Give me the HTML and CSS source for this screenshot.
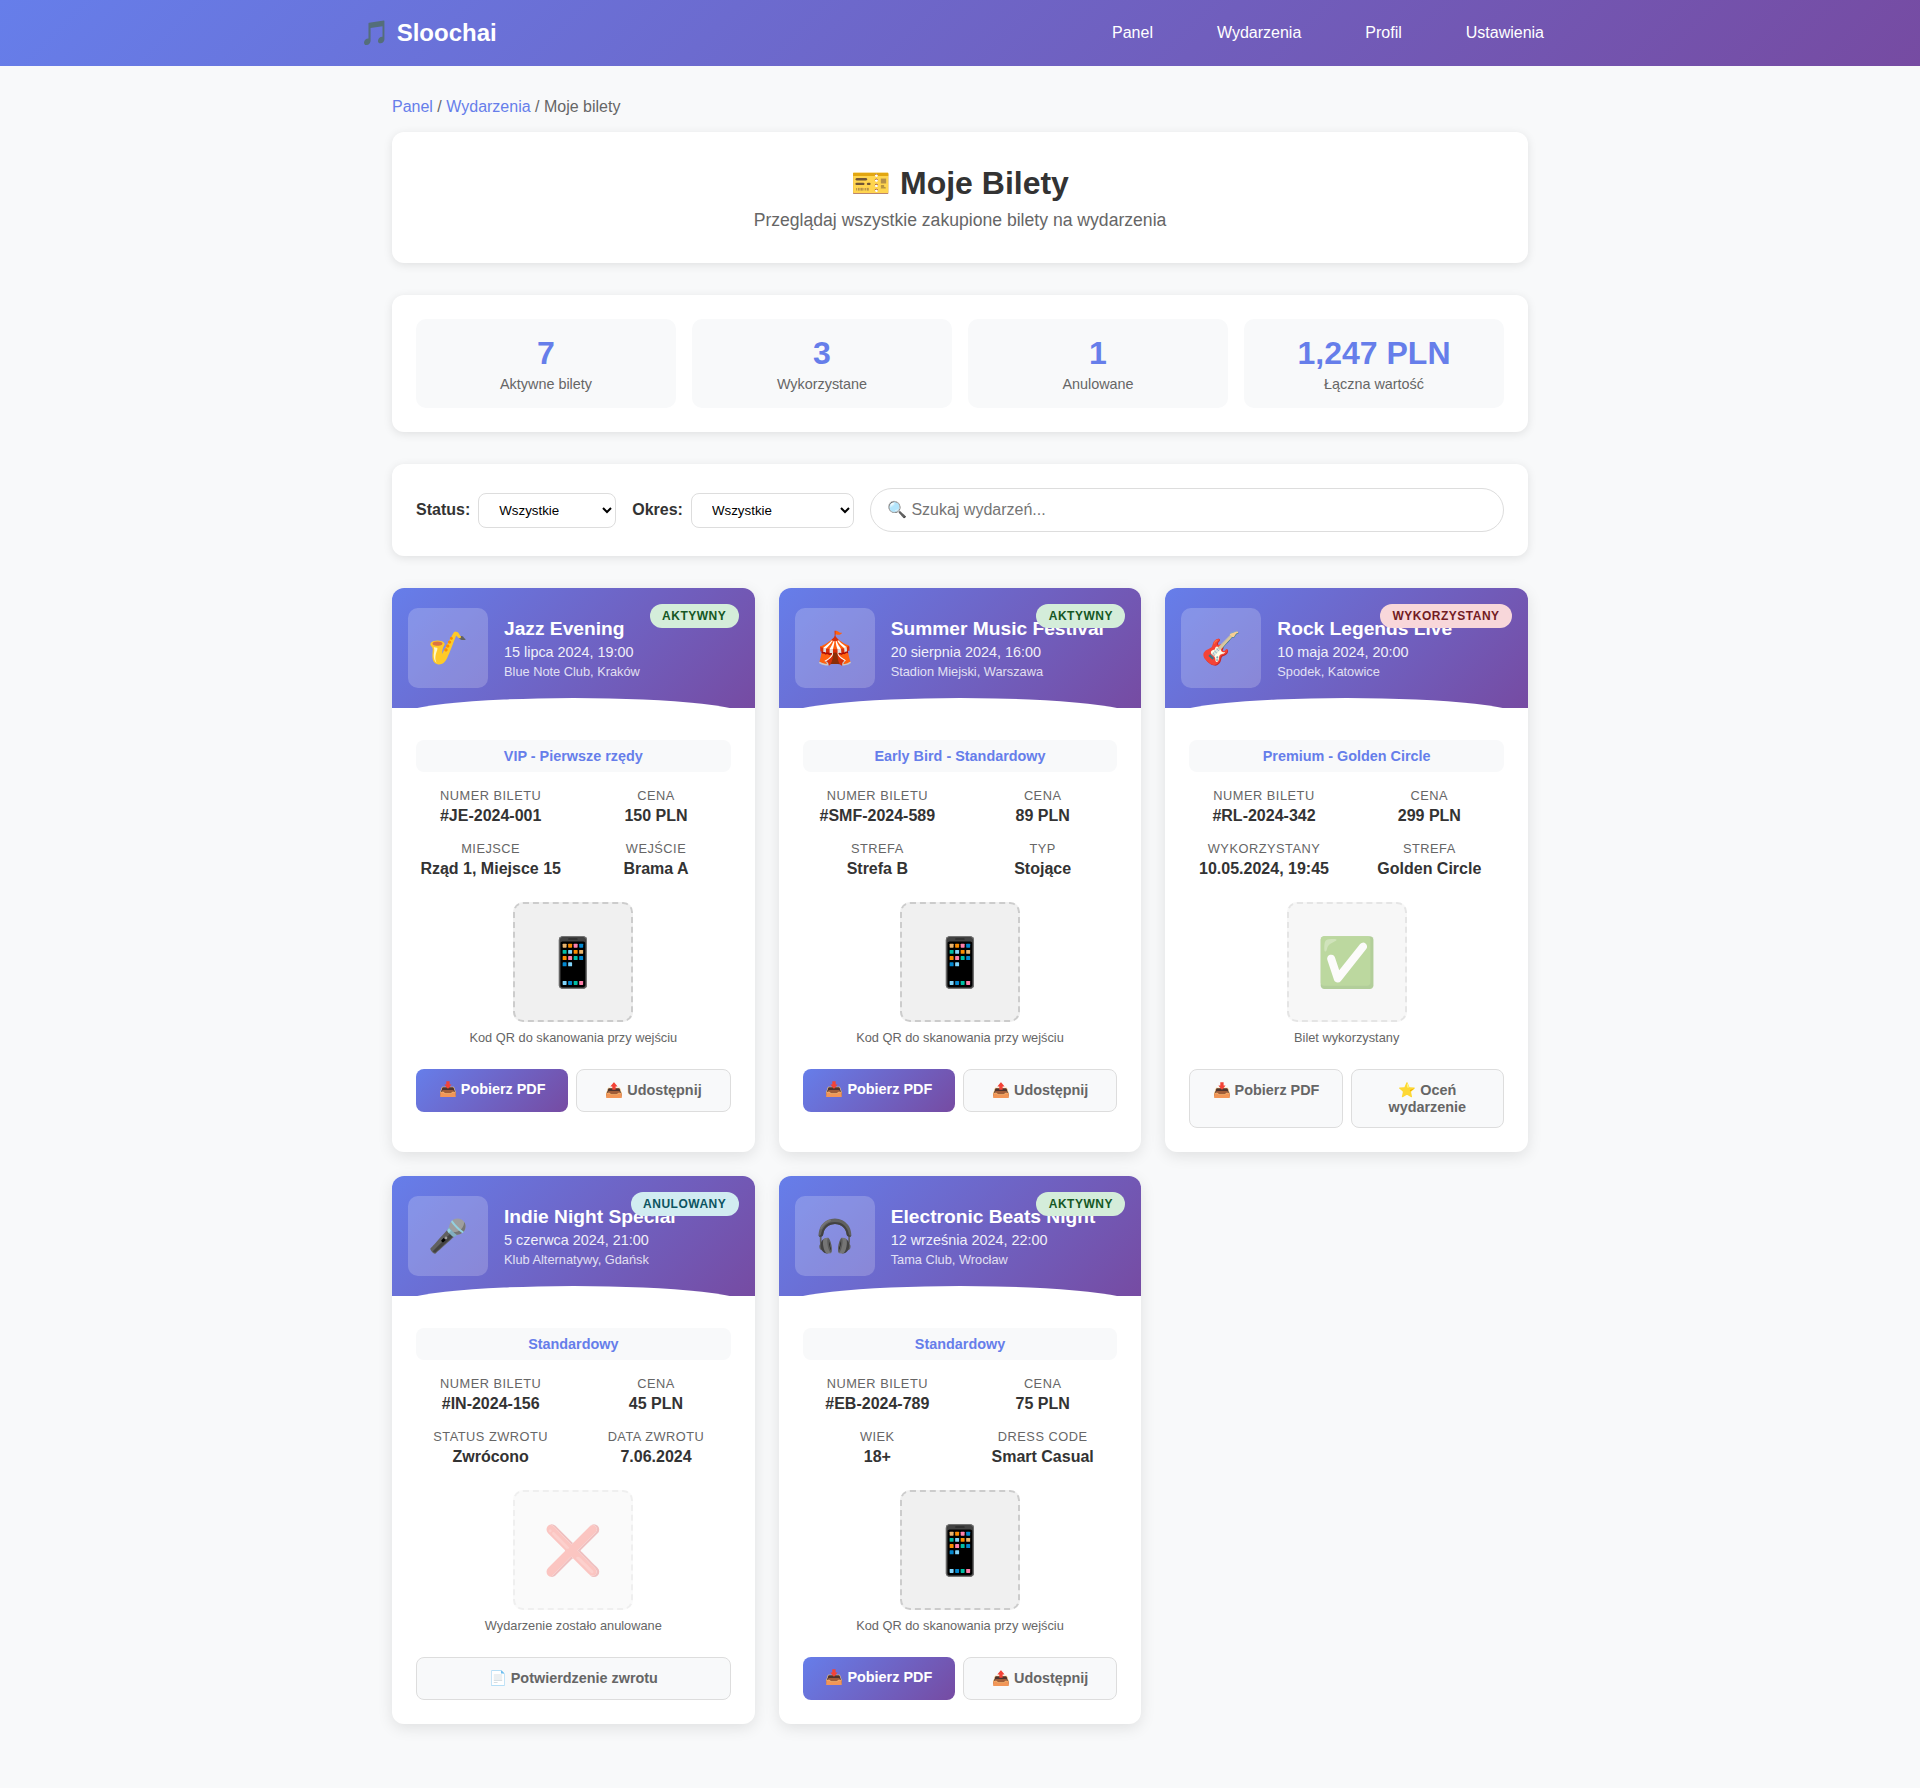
FILE: index.html
```html
<!DOCTYPE html>
<html lang="pl">
<head>
  <meta charset="UTF-8">
  <meta name="viewport" content="width=device-width, initial-scale=1.0">
  <title>Moje Bilety - Sloochai</title>
  <link rel="stylesheet" href="styles.css">
</head>
<body>
  <header class="topbar">
    <nav class="topbar-inner">
      <a class="logo" href="#">🎵 Sloochai</a>
      <ul class="nav-links">
        <li><a href="#">Panel</a></li>
        <li><a href="#">Wydarzenia</a></li>
        <li><a href="#">Profil</a></li>
        <li><a href="#">Ustawienia</a></li>
      </ul>
    </nav>
  </header>

  <main class="container">
    <div class="breadcrumb"><a href="#">Panel</a> / <a href="#">Wydarzenia</a> / Moje bilety</div>

    <section class="page-header panel">
      <h1>🎫 Moje Bilety</h1>
      <p>Przeglądaj wszystkie zakupione bilety na wydarzenia</p>
    </section>

    <section class="stats panel">
      <div class="stat"><div class="stat-value">7</div><div class="stat-label">Aktywne bilety</div></div>
      <div class="stat"><div class="stat-value">3</div><div class="stat-label">Wykorzystane</div></div>
      <div class="stat"><div class="stat-value">1</div><div class="stat-label">Anulowane</div></div>
      <div class="stat"><div class="stat-value">1,247 PLN</div><div class="stat-label">Łączna wartość</div></div>
    </section>

    <section class="filters panel">
      <label for="status">Status:</label>
      <select id="status">
        <option>Wszystkie</option>
        <option>Aktywne</option>
        <option>Wykorzystane</option>
        <option>Anulowane</option>
      </select>
      <label for="period">Okres:</label>
      <select id="period">
        <option>Wszystkie</option>
        <option>Nadchodzące</option>
        <option>Poprzedni miesiąc</option>
        <option>Ten rok</option>
      </select>
      <input class="search" type="text" placeholder="🔍 Szukaj wydarzeń...">
    </section>

    <section class="tickets">
      <article class="ticket">
        <div class="ticket-header">
          <span class="badge badge-active">Aktywny</span>
          <div class="thumb">🎷</div>
          <div>
            <h3>Jazz Evening</h3>
            <div class="date">15 lipca 2024, 19:00</div>
            <div class="venue">Blue Note Club, Kraków</div>
          </div>
        </div>
        <div class="ticket-body">
          <div class="ticket-type">VIP - Pierwsze rzędy</div>
          <div class="details">
            <div><div class="detail-label">Numer biletu</div><div class="detail-value">#JE-2024-001</div></div>
            <div><div class="detail-label">Cena</div><div class="detail-value">150 PLN</div></div>
            <div><div class="detail-label">Miejsce</div><div class="detail-value">Rząd 1, Miejsce 15</div></div>
            <div><div class="detail-label">Wejście</div><div class="detail-value">Brama A</div></div>
          </div>
          <div class="qr-block">
            <div class="qr">📱</div>
            <div class="qr-text">Kod QR do skanowania przy wejściu</div>
          </div>
          <div class="actions">
            <a class="btn btn-primary" href="#">📥 Pobierz PDF</a>
            <a class="btn btn-secondary" href="#">📤 Udostępnij</a>
          </div>
        </div>
      </article>

      <article class="ticket">
        <div class="ticket-header">
          <span class="badge badge-active">Aktywny</span>
          <div class="thumb">🎪</div>
          <div>
            <h3>Summer Music Festival</h3>
            <div class="date">20 sierpnia 2024, 16:00</div>
            <div class="venue">Stadion Miejski, Warszawa</div>
          </div>
        </div>
        <div class="ticket-body">
          <div class="ticket-type">Early Bird - Standardowy</div>
          <div class="details">
            <div><div class="detail-label">Numer biletu</div><div class="detail-value">#SMF-2024-589</div></div>
            <div><div class="detail-label">Cena</div><div class="detail-value">89 PLN</div></div>
            <div><div class="detail-label">Strefa</div><div class="detail-value">Strefa B</div></div>
            <div><div class="detail-label">Typ</div><div class="detail-value">Stojące</div></div>
          </div>
          <div class="qr-block">
            <div class="qr">📱</div>
            <div class="qr-text">Kod QR do skanowania przy wejściu</div>
          </div>
          <div class="actions">
            <a class="btn btn-primary" href="#">📥 Pobierz PDF</a>
            <a class="btn btn-secondary" href="#">📤 Udostępnij</a>
          </div>
        </div>
      </article>

      <article class="ticket">
        <div class="ticket-header">
          <span class="badge badge-used">Wykorzystany</span>
          <div class="thumb">🎸</div>
          <div>
            <h3>Rock Legends Live</h3>
            <div class="date">10 maja 2024, 20:00</div>
            <div class="venue">Spodek, Katowice</div>
          </div>
        </div>
        <div class="ticket-body">
          <div class="ticket-type">Premium - Golden Circle</div>
          <div class="details">
            <div><div class="detail-label">Numer biletu</div><div class="detail-value">#RL-2024-342</div></div>
            <div><div class="detail-label">Cena</div><div class="detail-value">299 PLN</div></div>
            <div><div class="detail-label">Wykorzystany</div><div class="detail-value">10.05.2024, 19:45</div></div>
            <div><div class="detail-label">Strefa</div><div class="detail-value">Golden Circle</div></div>
          </div>
          <div class="qr-block">
            <div class="qr qr-used">✅</div>
            <div class="qr-text">Bilet wykorzystany</div>
          </div>
          <div class="actions">
            <a class="btn btn-secondary" href="#">📥 Pobierz PDF</a>
            <a class="btn btn-secondary" href="#">⭐ Oceń wydarzenie</a>
          </div>
        </div>
      </article>

      <article class="ticket">
        <div class="ticket-header">
          <span class="badge badge-cancelled">Anulowany</span>
          <div class="thumb">🎤</div>
          <div>
            <h3>Indie Night Special</h3>
            <div class="date">5 czerwca 2024, 21:00</div>
            <div class="venue">Klub Alternatywy, Gdańsk</div>
          </div>
        </div>
        <div class="ticket-body">
          <div class="ticket-type">Standardowy</div>
          <div class="details">
            <div><div class="detail-label">Numer biletu</div><div class="detail-value">#IN-2024-156</div></div>
            <div><div class="detail-label">Cena</div><div class="detail-value">45 PLN</div></div>
            <div><div class="detail-label">Status zwrotu</div><div class="detail-value">Zwrócono</div></div>
            <div><div class="detail-label">Data zwrotu</div><div class="detail-value">7.06.2024</div></div>
          </div>
          <div class="qr-block">
            <div class="qr qr-cancelled">❌</div>
            <div class="qr-text">Wydarzenie zostało anulowane</div>
          </div>
          <div class="actions">
            <a class="btn btn-secondary" href="#">📄 Potwierdzenie zwrotu</a>
          </div>
        </div>
      </article>

      <article class="ticket">
        <div class="ticket-header">
          <span class="badge badge-active">Aktywny</span>
          <div class="thumb">🎧</div>
          <div>
            <h3>Electronic Beats Night</h3>
            <div class="date">12 września 2024, 22:00</div>
            <div class="venue">Tama Club, Wrocław</div>
          </div>
        </div>
        <div class="ticket-body">
          <div class="ticket-type">Standardowy</div>
          <div class="details">
            <div><div class="detail-label">Numer biletu</div><div class="detail-value">#EB-2024-789</div></div>
            <div><div class="detail-label">Cena</div><div class="detail-value">75 PLN</div></div>
            <div><div class="detail-label">Wiek</div><div class="detail-value">18+</div></div>
            <div><div class="detail-label">Dress code</div><div class="detail-value">Smart Casual</div></div>
          </div>
          <div class="qr-block">
            <div class="qr">📱</div>
            <div class="qr-text">Kod QR do skanowania przy wejściu</div>
          </div>
          <div class="actions">
            <a class="btn btn-primary" href="#">📥 Pobierz PDF</a>
            <a class="btn btn-secondary" href="#">📤 Udostępnij</a>
          </div>
        </div>
      </article>
    </section>
  </main>
</body>
</html>
```

FILE: styles.css
```css
* {
  margin: 0;
  padding: 0;
  box-sizing: border-box;
}
body {
  font-family: "Liberation Sans", Arial, sans-serif;
  background: #f8f9fa;
  color: #333;
}
a {
  text-decoration: none;
}

/* Top bar */
.topbar {
  background: linear-gradient(135deg, #667eea 0%, #764ba2 100%);
  padding: 16px 0;
}
.topbar-inner {
  max-width: 1200px;
  margin: 0 auto;
  display: flex;
  justify-content: space-between;
  align-items: center;
}
.logo {
  color: white;
  font-size: 24px;
  font-weight: bold;
}
.nav-links {
  display: flex;
  gap: 32px;
  list-style: none;
}
.nav-links a {
  display: block;
  color: white;
  padding: 8px 16px;
}

/* Page */
.container {
  max-width: 1200px;
  margin: 0 auto;
  padding: 32px;
}
.breadcrumb {
  color: #666;
  margin-bottom: 16px;
}
.breadcrumb a {
  color: #667eea;
}
.panel {
  background: white;
  border-radius: 12px;
  box-shadow: 0 2px 10px rgba(0, 0, 0, 0.1);
  margin-bottom: 32px;
}
.page-header {
  padding: 32px;
  text-align: center;
}
.page-header h1 {
  font-size: 32px;
  margin-bottom: 8px;
}
.page-header p {
  color: #666;
  font-size: 17.6px;
}

/* Stats */
.stats {
  display: grid;
  grid-template-columns: repeat(4, 1fr);
  gap: 16px;
  padding: 24px;
}
.stat {
  background: #f8f9fa;
  border-radius: 10px;
  padding: 16px;
  text-align: center;
}
.stat-value {
  color: #667eea;
  font-size: 32px;
  font-weight: bold;
  margin-bottom: 4px;
}
.stat-label {
  color: #666;
  font-size: 14.4px;
}

/* Filters */
.filters {
  display: flex;
  align-items: center;
  padding: 24px;
}
.filters label {
  font-weight: bold;
  margin-right: 8px;
}
.filters select {
  padding: 8px 16px;
  border: 1px solid #ddd;
  border-radius: 8px;
  background: white;
  margin-right: 16px;
  font-family: inherit;
}
.search {
  flex: 1;
  padding: 12px 16px;
  border: 1px solid #ddd;
  border-radius: 25px;
  font-size: 16px;
  font-family: inherit;
}

/* Tickets */
.tickets {
  display: grid;
  grid-template-columns: repeat(3, 1fr);
  gap: 24px;
  margin-bottom: 32px;
}
.ticket {
  background: white;
  border-radius: 12px;
  box-shadow: 0 4px 15px rgba(0, 0, 0, 0.1);
  overflow: hidden;
}
.ticket-header {
  position: relative;
  display: flex;
  align-items: center;
  gap: 16px;
  padding: 20px 16px;
  color: white;
  background: linear-gradient(135deg, #667eea 0%, #764ba2 100%);
}
.ticket-header::after {
  content: "";
  position: absolute;
  left: 0;
  right: 0;
  bottom: -10px;
  height: 20px;
  background: white;
  border-radius: 50% 50% 0 0 / 100% 100% 0 0;
}
.thumb {
  flex-shrink: 0;
  width: 80px;
  height: 80px;
  display: flex;
  align-items: center;
  justify-content: center;
  font-size: 32px;
  background: rgba(255, 255, 255, 0.2);
  border-radius: 10px;
}
.ticket-header h3 {
  font-size: 19.2px;
  margin-bottom: 4px;
}
.date {
  font-size: 14.4px;
  opacity: 0.9;
  margin-bottom: 4px;
}
.venue {
  font-size: 12.8px;
  opacity: 0.8;
}
.badge {
  position: absolute;
  top: 16px;
  right: 16px;
  padding: 4.8px 12.4px;
  border-radius: 20px;
  font-size: 12px;
  font-weight: bold;
  text-transform: uppercase;
  letter-spacing: 0.5px;
}
.badge-active {
  background: #d4edda;
  color: #155724;
}
.badge-used {
  background: #f8d7da;
  color: #721c24;
}
.badge-cancelled {
  background: #d1ecf1;
  color: #0c5460;
}
.ticket-body {
  padding: 32px 24px 24px;
}
.ticket-type {
  background: #f8f9fa;
  border-radius: 8px;
  padding: 8px;
  margin-bottom: 16px;
  color: #667eea;
  font-size: 14.4px;
  font-weight: bold;
  text-align: center;
}
.details {
  display: grid;
  grid-template-columns: 1fr 1fr;
  gap: 16px;
  margin-bottom: 24px;
  text-align: center;
}
.detail-label {
  color: #666;
  font-size: 12.8px;
  text-transform: uppercase;
  letter-spacing: 0.5px;
  margin-bottom: 4px;
}
.detail-value {
  font-weight: bold;
}
.qr-block {
  text-align: center;
  margin-bottom: 24px;
}
.qr {
  width: 120px;
  height: 120px;
  margin: 0 auto 8px;
  display: flex;
  align-items: center;
  justify-content: center;
  font-size: 48px;
  background: #f0f0f0;
  border: 2px dashed #ccc;
  border-radius: 10px;
}
.qr-used {
  opacity: 0.5;
}
.qr-cancelled {
  opacity: 0.3;
}
.qr-text {
  color: #666;
  font-size: 12.8px;
}
.actions {
  display: flex;
  gap: 8px;
}
.btn {
  flex: 1;
  padding: 12px 16px;
  border-radius: 8px;
  font-size: 14.4px;
  font-weight: bold;
  text-align: center;
}
.btn-primary {
  color: white;
  background: linear-gradient(135deg, #667eea 0%, #764ba2 100%);
}
.btn-secondary {
  color: #666;
  background: #f8f9fa;
  border: 1px solid #ddd;
}
```
